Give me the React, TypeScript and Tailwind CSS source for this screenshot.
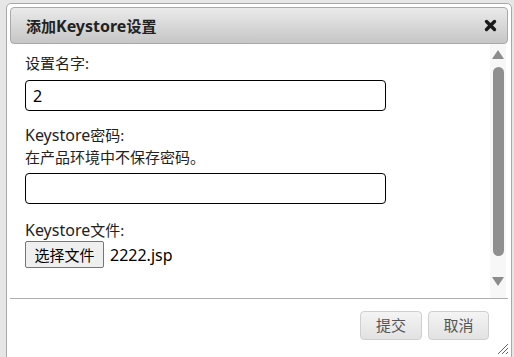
import { useState } from "react";

const font = { fontFamily: '"Noto Sans", "Noto Sans CJK SC", sans-serif' };

function ScrollBar() {
  return (
    <div className="flex h-full w-[16px] flex-col items-center bg-[#f7f7f7] pt-[6px]">
      {/* up arrow */}
      <svg width="12" height="9" viewBox="0 0 12 9">
        <path d="M6 0 L12 9 L0 9 Z" fill="#8c8c8c" />
      </svg>
      <div className="mt-[8px] h-[189px] w-[11px] rounded-[6px] bg-[#8f8f8f]" />
      <div className="flex-1" />
      <svg width="12" height="9" viewBox="0 0 12 9" className="mb-[12px]">
        <path d="M0 0 L12 0 L6 9 Z" fill="#8c8c8c" />
      </svg>
    </div>
  );
}

const latin = "text-[16px]";

export default function App() {
  const [name, setName] = useState("2");
  const [password, setPassword] = useState("");

  return (
    <div className="h-[357px] w-[514px] overflow-hidden bg-[#e6e6e6] pl-[6px] pt-[3px]" style={font}>
      <div className="relative h-[370px] w-[506px] rounded-t-[5px] border border-[#a8a8a8] bg-white p-[3px]">
        {/* title bar */}
        <div className="flex h-[37px] items-center justify-between rounded-[4px] border border-[#a9a9a9] bg-gradient-to-b from-[#eaeaea] to-[#c6c6c6] pl-[15px] pr-[10px]">
          <span className="text-[15px] font-bold text-[#222]">
            添加<span className={latin}>Keystore</span>设置
          </span>
          <svg width="13" height="13" viewBox="0 0 13 13">
            <path d="M2.5 2.5 L10.5 10.5 M10.5 2.5 L2.5 10.5" stroke="#1a1a1a" strokeWidth="3.4" strokeLinecap="round" />
          </svg>
        </div>

        {/* content */}
        <div className="flex h-[254px]">
          <div className="flex-1 pl-[15px] pt-[8px] text-[15px] leading-[22px] text-[#222]">
            <div>设置名字:</div>
            <input
              value={name}
              onChange={(e) => setName(e.target.value)}
              className="mt-[6px] block h-[31px] w-[361px] rounded-[4px] border border-black px-[7px] text-[16px] text-black outline-none"
            />
            <div className="mt-[13px]">
              <span className={latin}>Keystore</span>密码:
            </div>
            <div>在产品环境中不保存密码。</div>
            <input
              type="password"
              value={password}
              onChange={(e) => setPassword(e.target.value)}
              className="mt-[5px] block h-[31px] w-[361px] rounded-[4px] border border-black px-[7px] text-[15px] outline-none"
            />
            <div className="mt-[15px]">
              <span className={latin}>Keystore</span>文件:
            </div>
            <div className="flex items-center">
              <button className="h-[27px] w-[79px] rounded-[2px] border border-[#767676] bg-[#efefef] text-[15px] leading-[20px] text-black">
                选择文件
              </button>
              <span className="ml-[6px] text-[16px] text-black">2222.jsp</span>
            </div>
          </div>
          <div className="mr-[2px]">
            <ScrollBar />
          </div>
        </div>

        {/* footer */}
        <div className="border-t border-[#aeaeae] pr-[19px] pt-[12px]">
          <div className="flex justify-end gap-[6px]">
            <button className="h-[29px] w-[62px] rounded-[4px] border border-[#cfcfcf] bg-gradient-to-b from-[#f4f4f4] to-[#e2e2e2] text-[15px] text-[#555]">
              提交
            </button>
            <button className="h-[29px] w-[61px] rounded-[4px] border border-[#cfcfcf] bg-gradient-to-b from-[#f4f4f4] to-[#e2e2e2] text-[15px] text-[#555]">
              取消
            </button>
          </div>
        </div>

        {/* resize grip */}
        <svg className="absolute left-[490px] top-[339px]" width="12" height="12" viewBox="0 0 12 12">
          <path d="M11 1 L1 11 M11 5 L5 11 M11 9 L9 11" stroke="#666" strokeWidth="1" />
        </svg>
      </div>
    </div>
  );
}
